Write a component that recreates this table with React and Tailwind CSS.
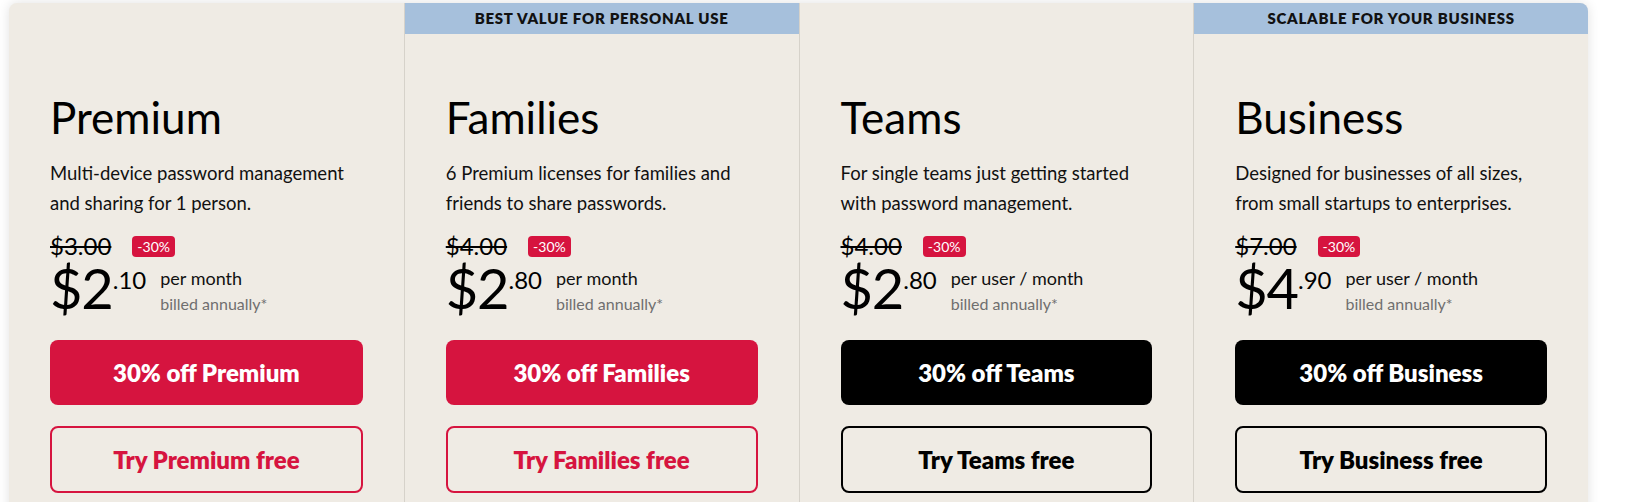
import React from "react";

const plans = [
  {
    name: "Premium",
    banner: null,
    desc: ["Multi-device password management", "and sharing for 1 person."],
    old: "$3.00",
    dollars: "$2",
    cents: ".10",
    unit: "per month",
    dark: false,
  },
  {
    name: "Families",
    banner: "Best value for personal use",
    desc: ["6 Premium licenses for families and", "friends to share passwords."],
    old: "$4.00",
    dollars: "$2",
    cents: ".80",
    unit: "per month",
    dark: false,
  },
  {
    name: "Teams",
    banner: null,
    desc: ["For single teams just getting started", "with password management."],
    old: "$4.00",
    dollars: "$2",
    cents: ".80",
    unit: "per user / month",
    dark: true,
  },
  {
    name: "Business",
    banner: "Scalable for your business",
    desc: ["Designed for businesses of all sizes,", "from small startups to enterprises."],
    old: "$7.00",
    dollars: "$4",
    cents: ".90",
    unit: "per user / month",
    dark: true,
  },
];

function PlanColumn({ plan, first }) {
  return (
    <div className={first ? "flex flex-col" : "flex flex-col border-l border-[#d6d2ca]"}>
      {plan.banner ? (
        <div className="h-[31px] bg-[#a6c0dc] flex items-center justify-center text-[15px] font-extrabold uppercase tracking-[0.05em] text-[#111]">
          {plan.banner}
        </div>
      ) : (
        <div className="h-[31px]" />
      )}
      <div className="px-[41px] pt-[57px] pb-[40px]">
        <h2 className="text-[44px] leading-[52px] font-normal text-black">{plan.name}</h2>
        <p className="mt-[15px] text-[18.5px] leading-[30px] text-[#111]">
          {plan.desc[0]}
          <br />
          {plan.desc[1]}
        </p>
        <div className="mt-[14px] flex items-center h-[28px]">
          <span className="text-[24px] leading-[28px] line-through text-black">{plan.old}</span>
          <span className="ml-[21px] h-[21px] px-[5px] rounded-[4px] bg-[#d6143f] text-white text-[14px] leading-[21px]">
            -30%
          </span>
        </div>
        <div className="flex items-start h-[56px]">
          <span className="text-[56px] leading-[56px] tracking-[-0.02em] text-black">{plan.dollars}</span>
          <span className="mt-[8px] text-[24px] leading-[24px] text-black">{plan.cents}</span>
          <div className="ml-[14px] mt-[5px] flex flex-col">
            <span className="text-[18px] leading-[26px] text-[#111]">{plan.unit}</span>
            <span className="text-[16px] leading-[26px] text-[#6f6f6f]">billed annually*</span>
          </div>
        </div>
        <button
          className={
            plan.dark
              ? "mt-[24px] w-full h-[65px] rounded-lg bg-black text-white text-[24px] font-extrabold"
              : "mt-[24px] w-full h-[65px] rounded-lg bg-[#d6143f] text-white text-[24px] font-extrabold"
          }
        >
          30% off {plan.name}
        </button>
        <button
          className={
            plan.dark
              ? "mt-[21px] w-full h-[67px] rounded-lg border-2 border-black text-black text-[24px] font-extrabold"
              : "mt-[21px] w-full h-[67px] rounded-lg border-2 border-[#d6143f] text-[#d6143f] text-[24px] font-extrabold"
          }
        >
          Try {plan.name} free
        </button>
      </div>
    </div>
  );
}

export default function App() {
  return (
    <div className="min-h-screen bg-white pt-[3px] pl-[9px] font-['Lato',sans-serif]">
      <div className="w-[1579px] rounded-lg bg-[#efebe4] shadow-[0_0_12px_rgba(0,0,0,0.12)] grid grid-cols-4 overflow-hidden">
        {plans.map((p, i) => (
          <PlanColumn key={p.name} plan={p} first={i === 0} />
        ))}
      </div>
    </div>
  );
}
